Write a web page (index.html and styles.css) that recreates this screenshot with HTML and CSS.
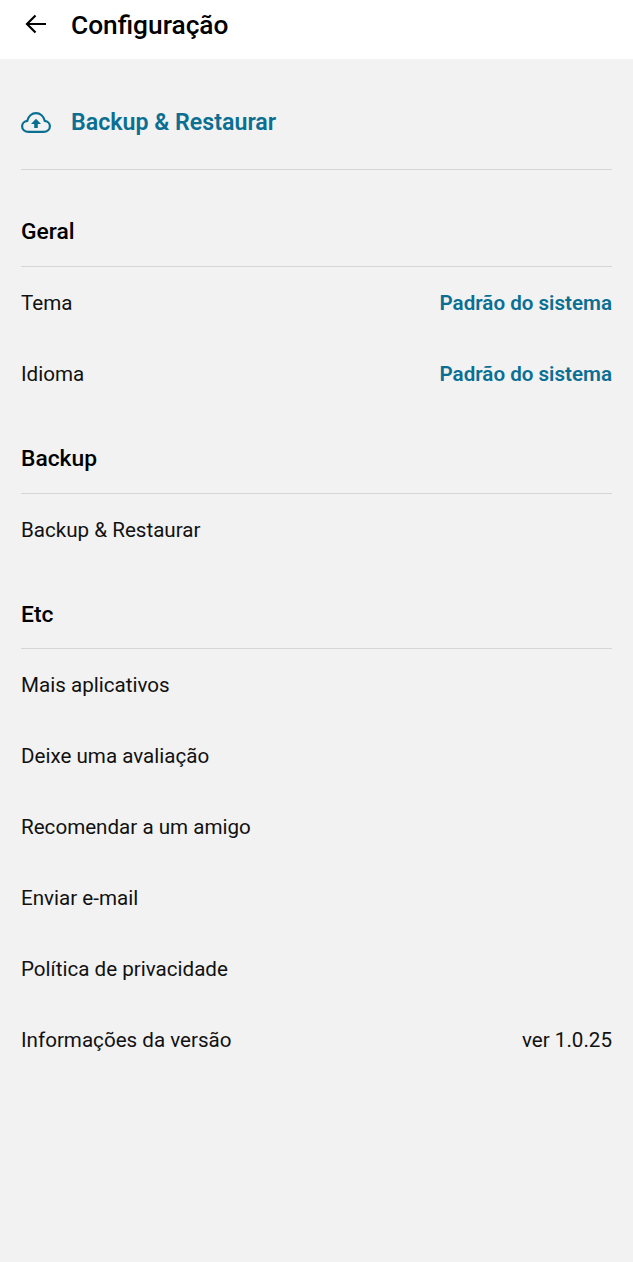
FILE: index.html
```html
<!DOCTYPE html>
<html lang="pt">
<head>
<meta charset="utf-8">
<title>Configuração</title>
<link rel="stylesheet" href="styles.css">
</head>
<body>
<header class="appbar">
  <svg class="back" width="24" height="24" viewBox="0 0 24 24" fill="none" stroke="#000" stroke-width="2.2"><path d="M22 12H3.500M11.500 3.500 3 12l8.500 8.500"/></svg>
  <h1 class="title">Configuração</h1>
</header>
<main class="content">
  <div class="banner">
    <svg class="cloud" width="30" height="21" viewBox="0 0 30 21" fill="none" stroke="#0b6f92" stroke-width="2.200"><path d="M7.500 19.800C3.700 19.800 1.100 17.400 1.100 14.300c0-2.800 2.200-5.100 5.100-5.400C7.300 4.500 10.800 1.200 15 1.200s7.700 3.300 8.800 7.700c2.900.3 5.100 2.600 5.100 5.400 0 3.100-2.600 5.500-6.400 5.500z"/><path fill="#0b6f92" stroke="none" d="M15 6.800l5 5.200h-3.200v4h-3.600v-4H10z"/></svg>
    <span class="banner-text">Backup &amp; Restaurar</span>
  </div>
  <section class="group first">
    <h2 class="heading">Geral</h2>
    <div class="row"><span>Tema</span><span class="accent">Padrão do sistema</span></div>
    <div class="row"><span>Idioma</span><span class="accent">Padrão do sistema</span></div>
  </section>
  <section class="group">
    <h2 class="heading">Backup</h2>
    <div class="row"><span>Backup &amp; Restaurar</span></div>
  </section>
  <section class="group last">
    <h2 class="heading">Etc</h2>
    <div class="row"><span>Mais aplicativos</span></div>
    <div class="row"><span>Deixe uma avaliação</span></div>
    <div class="row"><span>Recomendar a um amigo</span></div>
    <div class="row"><span>Enviar e-mail</span></div>
    <div class="row"><span>Política de privacidade</span></div>
    <div class="row"><span>Informações da versão</span><span>ver 1.0.25</span></div>
  </section>
</main>
</body>
</html>
```
FILE: styles.css
```css
* { box-sizing: border-box; }
html, body { margin: 0; height: 100%; }
body {
  width: 633px;
  height: 1262px;
  overflow: hidden;
  background: #f2f2f2;
  font-family: Roboto, "Noto Sans", sans-serif;
  color: #111;
  display: flex;
  flex-direction: column;
}
.appbar {
  height: 59px;
  background: #fff;
  display: flex;
  align-items: flex-start;
  padding: 12px 0 0 24px;
  gap: 23px;
  flex: none;
}
.title {
  margin: 0;
  font-size: 26.300px;
  line-height: 27px;
  font-weight: 500;
  color: #000;
}
.content { padding: 0 21px; flex: 1; }
.banner {
  height: 111px;
  display: flex;
  align-items: center;
  gap: 20px;
  border-bottom: 1px solid #d6d6d6;
  padding-top: 16px;
}
.cloud { flex: none; }
.banner-text {
  font-size: 23.200px;
  font-weight: 600;
  color: #0b6f92;
}
.group { padding-top: 35px; }
.group.first { padding-top: 47px; }
.heading {
  margin: 0;
  font-size: 22.800px;
  line-height: 30px;
  font-weight: 500;
  color: #000;
  padding-bottom: 19px;
  border-bottom: 1px solid #d6d6d6;
}
.group.last .heading { padding-bottom: 18px; }
.row {
  height: 71px;
  display: flex;
  justify-content: space-between;
  align-items: center;
  font-size: 20.600px;
}
.accent { color: #0b6f92; font-weight: 600; }
```
